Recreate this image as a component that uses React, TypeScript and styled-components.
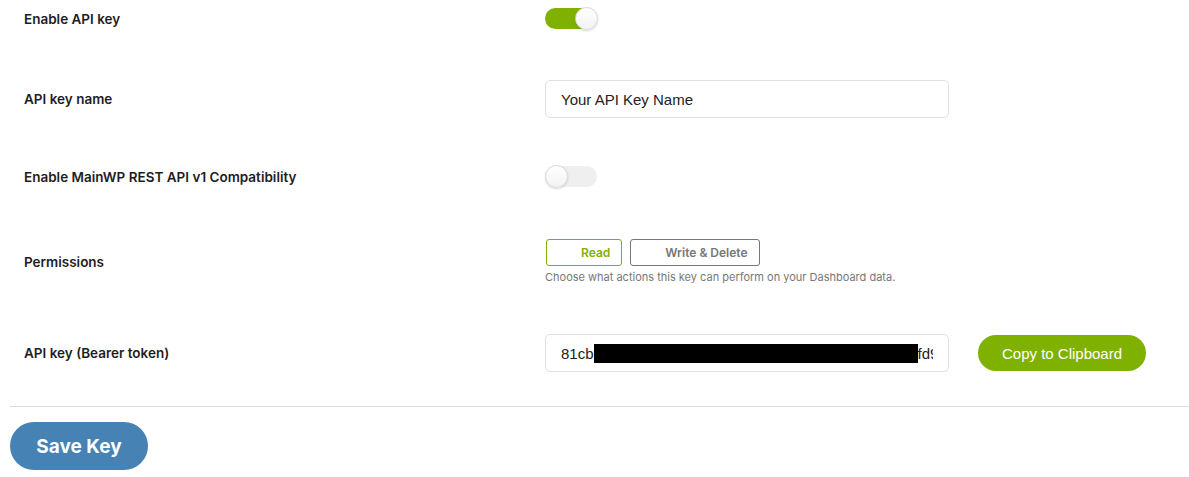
import React, {useState} from 'react'
import styled, {createGlobalStyle} from 'styled-components'

const GlobalStyle = createGlobalStyle`
  body {
    margin: 0;
    background: #fff;
    font-family: Inter, "Noto Sans", sans-serif;
    color: #1e1e1e;
  }
`

const green = '#7fb100'

export default function App() {
  const [enabled, setEnabled] = useState(true)
  const [compat, setCompat] = useState(false)
  const [perm, setPerm] = useState<'read' | 'write'>('read')
  const [name, setName] = useState('Your API Key Name')

  return <Page>
    <GlobalStyle/>
    <Form onSubmit={(e) => e.preventDefault()}>
      <Row $top={8}>
        <Label>Enable API key</Label>
        <Toggle type="button" $on={enabled} onClick={() => setEnabled(!enabled)}/>
      </Row>
      <Row $top={51}>
        <Label>API key name</Label>
        <TextField value={name} onChange={(e) => setName(e.currentTarget.value)}/>
      </Row>
      <Row $top={48}>
        <Label>Enable MainWP REST API v1 Compatibility</Label>
        <Toggle type="button" $on={compat} onClick={() => setCompat(!compat)}/>
      </Row>
      <Row $top={52}>
        <Label>Permissions</Label>
        <div>
          <Choices>
            <Choice type="button" $active={perm === 'read'} onClick={() => setPerm('read')}>Read</Choice>
            <Choice type="button" $active={perm === 'write'} onClick={() => setPerm('write')}>Write &amp; Delete</Choice>
          </Choices>
          <Hint>Choose what actions this key can perform on your Dashboard data.</Hint>
        </div>
      </Row>
      <Row $top={50}>
        <Label>API key (Bearer token)</Label>
        <TokenLine>
          <TokenBox>
            <TokenText>81cb<Redacted/>fd9</TokenText>
          </TokenBox>
          <CopyButton type="button">Copy to Clipboard</CopyButton>
        </TokenLine>
      </Row>
      <Divider/>
      <SaveButton type="submit">Save Key</SaveButton>
    </Form>
  </Page>
}

const Page = styled.div`
  padding: 0 0 0 10px;
`

const Form = styled.form`
  display: flex;
  flex-direction: column;
`

const Row = styled.div<{ $top: number }>`
  display: grid;
  grid-template-columns: 521px 1fr;
  align-items: center;
  padding-left: 14px;
  margin-top: ${p => p.$top}px;
`

const Label = styled.div`
  font-size: 13.5px;
  line-height: 16px;
  font-weight: 600;
  color: #1e1e1e;
`

const Toggle = styled.button<{ $on: boolean }>`
  position: relative;
  display: block;
  width: 52px;
  height: 21px;
  padding: 0;
  border: none;
  border-radius: 11px;
  background: ${p => p.$on ? green : '#efefef'};
  cursor: pointer;

  &::after {
    content: '';
    position: absolute;
    top: -1px;
    left: ${p => p.$on ? '30px' : '0'};
    width: 21px;
    height: 21px;
    border-radius: 50%;
    background: linear-gradient(#ffffff, #f3f3f3);
    border: 1px solid #d8d8d8;
    box-shadow: 0 1px 2px rgba(0, 0, 0, 0.15);
  }
`

const TextField = styled.input`
  display: block;
  box-sizing: border-box;
  width: 404px;
  height: 38px;
  padding: 0 15px;
  border: 1px solid #e0e0e0;
  border-radius: 5px;
  font-family: "Liberation Sans", Arial, sans-serif;
  font-size: 15px;
  color: #222;
  outline: none;
`

const Choices = styled.div`
  display: flex;
  gap: 8px;
  margin-left: 1px;
`

const Choice = styled.button<{ $active: boolean }>`
  height: 27px;
  padding: 0 11px 0 34px;
  background: #fff;
  border: 1px solid ${p => p.$active ? green : '#777'};
  border-radius: 3px;
  font-family: Inter, sans-serif;
  font-size: 12px;
  font-weight: 600;
  color: ${p => p.$active ? green : '#777'};
  cursor: pointer;
`

const Hint = styled.div`
  margin-top: 5px;
  font-size: 11px;
  line-height: 13px;
  color: #777;
`

const TokenLine = styled.div`
  display: flex;
  align-items: center;
  gap: 29px;
`

const TokenBox = styled.div`
  box-sizing: border-box;
  width: 404px;
  height: 38px;
  padding: 0 15px;
  border: 1px solid #e0e0e0;
  border-radius: 5px;
  display: flex;
  align-items: center;
`

const TokenText = styled.div`
  display: flex;
  align-items: center;
  overflow: hidden;
  white-space: nowrap;
  font-family: "Liberation Sans", Arial, sans-serif;
  font-size: 15px;
  color: #222;
`

const Redacted = styled.span`
  flex: none;
  width: 324px;
  height: 19px;
  background: #000;
`

const CopyButton = styled.button`
  height: 36px;
  width: 168px;
  border: none;
  border-radius: 18px;
  background: ${green};
  color: #fff;
  font-family: "Liberation Sans", Arial, sans-serif;
  font-size: 15px;
  cursor: pointer;
`

const Divider = styled.hr`
  margin: 34px 0 0;
  border: none;
  border-top: 1px solid #dcdcdc;
`

const SaveButton = styled.button`
  align-self: flex-start;
  margin-top: 15px;
  width: 138px;
  height: 48px;
  border: none;
  border-radius: 24px;
  background: #4682b4;
  color: #fff;
  font-family: Inter, sans-serif;
  font-size: 19px;
  font-weight: 700;
  cursor: pointer;
`
